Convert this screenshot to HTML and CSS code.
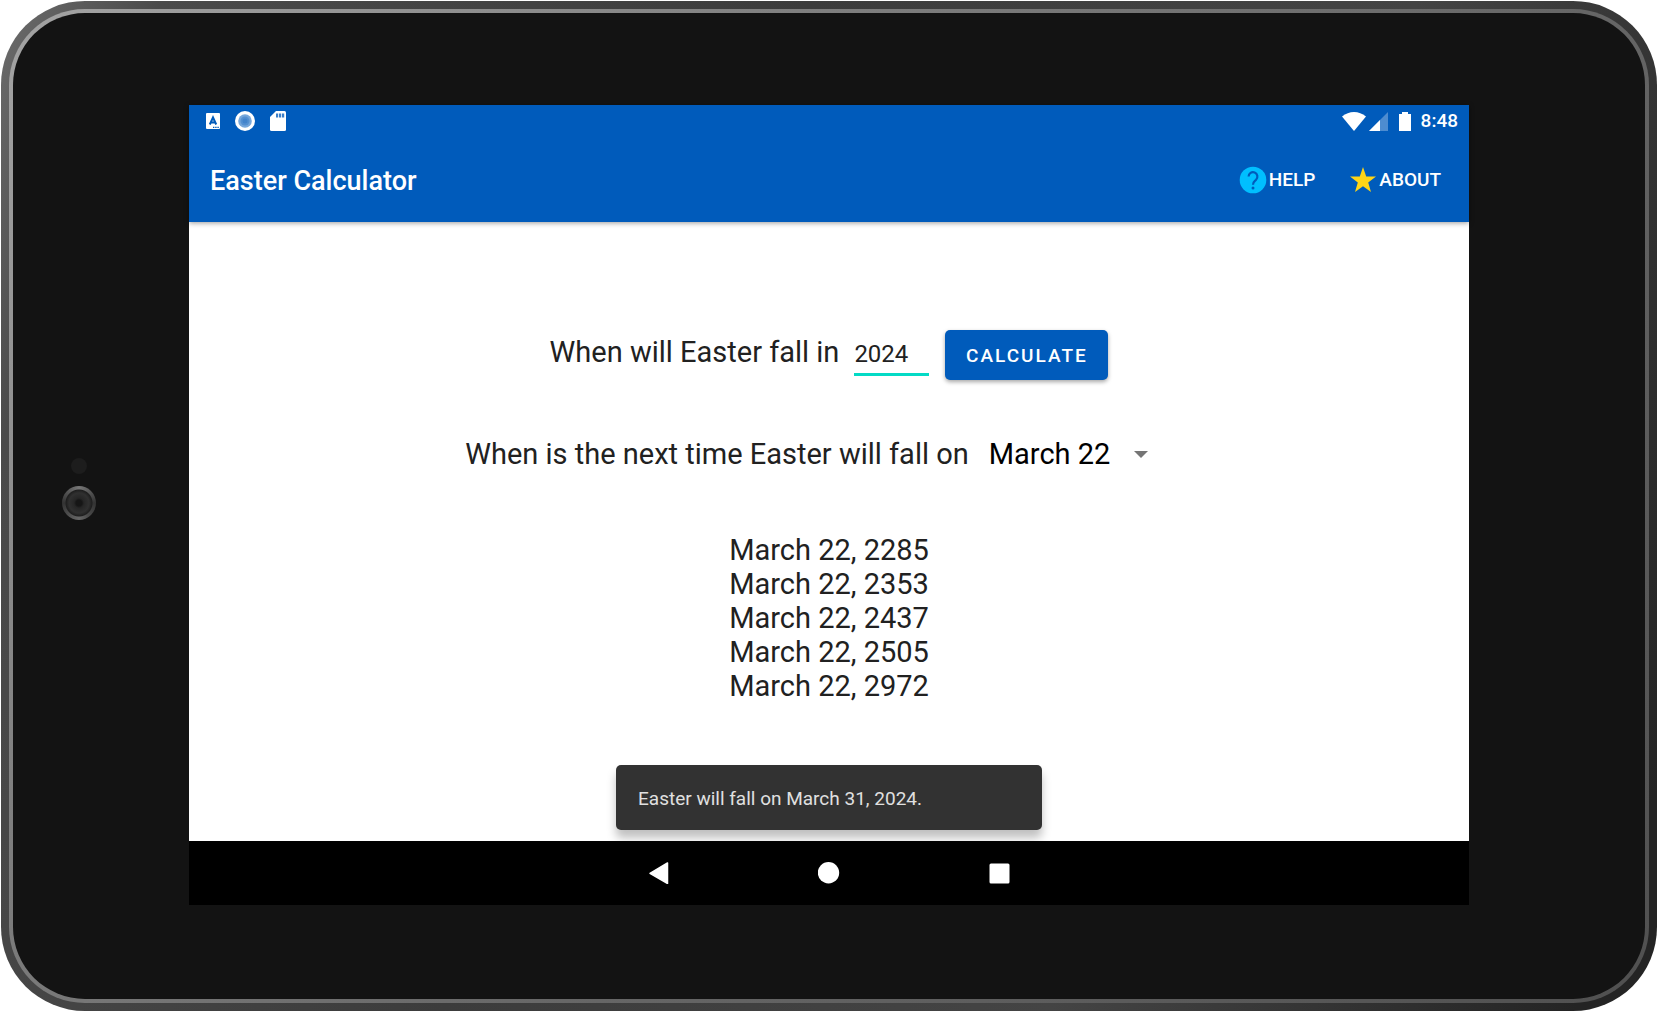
FILE: index.html
```html
<!DOCTYPE html>
<html lang="en">
<head>
<meta charset="utf-8">
<title>Easter Calculator</title>
<link rel="stylesheet" href="styles.css">
</head>
<body>
<div class="device">
  <div class="rim">
    <div class="bezel">
      <div class="camera">
        <span class="sensor"></span>
        <span class="lens"></span>
      </div>
      <div class="screen">
        <header class="top">
          <div class="status">
            <div class="status-left">
              <svg width="14" height="16" viewBox="0 0 14 16"><rect width="14" height="16" rx="1" fill="#fff"/><path d="M3.800 11.500 7 4.500l3.200 7M5 9.500h4" fill="none" stroke="#005bbb" stroke-width="2"/><path d="M7 14.300h6" stroke="#005bbb" stroke-width="1.200" stroke-dasharray="1.400 .8"/></svg>
              <svg width="20" height="20" viewBox="0 0 20 20"><circle cx="10" cy="10" r="10" fill="#fff"/><circle cx="10" cy="10" r="6.800" fill="#76a7db"/><circle cx="10" cy="10" r="4.500" fill="#5490d1"/><circle cx="10" cy="10" r="2.500" fill="#4384cb"/></svg>
              <svg width="16" height="20" viewBox="0 0 16 20"><path d="M6 0h8.500Q16 0 16 1.500v17q0 1.500-1.500 1.500h-13Q0 20 0 18.500V6z" fill="#fff"/><path d="M6 2.500h2.200v4H6zM9 2.500h2.200v4H9zM12 2.500h2.200v4H12z" fill="#3a7fca"/></svg>
            </div>
            <div class="status-right">
              <svg width="24" height="19" viewBox="0 0 24 19"><path d="M0 4.500Q5.500 0 12 0t12 4.500L12 19z" fill="#fff"/></svg>
              <svg class="cell" width="19" height="19" viewBox="0 0 19 19"><path d="M0 19 19 0v19z" fill="#4d8cd0"/><path d="M0 19 11 8v11z" fill="#fff"/></svg>
              <svg class="battery" width="12" height="19" viewBox="0 0 12 19"><path d="M3 0h6v2h3v17H0V2h3z" fill="#fff"/></svg>
              <span class="clock">8:48</span>
            </div>
          </div>
          <div class="toolbar">
            <h1 class="title">Easter Calculator</h1>
            <button class="action" type="button">
              <svg width="28" height="28" viewBox="0 0 28 28"><circle cx="14" cy="14" r="13.300" fill="#00bfff"/><path d="M9.600 10.600a4.400 4.400 0 1 1 7.500 3.100c-1.700 1.700-3.100 2.300-3.100 5" fill="none" stroke="#005bbb" stroke-width="2.200"/><circle cx="14" cy="22" r="1.500" fill="#005bbb"/></svg>HELP
            </button>
            <button class="action" type="button">
              <svg width="28" height="28" viewBox="0 0 28 28"><path d="m14 1 3.200 9.400H27l-7.800 6L22 26l-8-5.700L6 26l2.800-9.600-7.800-6h9.800z" fill="#ffd517"/></svg>ABOUT
            </button>
          </div>
        </header>
        <main class="content">
          <form class="row year-row">
            <label class="prompt" for="year">When will Easter fall in</label>
            <input class="year" id="year" type="text" inputmode="numeric" value="2024">
            <button class="calculate" type="button">CALCULATE</button>
          </form>
          <form class="row date-row">
            <label class="prompt" for="date">When is the next time Easter will fall on</label>
            <span class="picker">
              <select class="date" id="date">
                <option>March 22</option>
                <option>March 23</option>
                <option>March 24</option>
              </select>
              <svg class="arrow" width="14" height="7" viewBox="0 0 14 7"><path d="M0 0h14L7 7z" fill="#757575"/></svg>
            </span>
          </form>
          <ul class="results">
            <li>March 22, 2285</li>
            <li>March 22, 2353</li>
            <li>March 22, 2437</li>
            <li>March 22, 2505</li>
            <li>March 22, 2972</li>
          </ul>
          <div class="toast" role="status">Easter will fall on March 31, 2024.</div>
        </main>
        <nav class="nav">
          <button class="key" type="button" aria-label="Back"><svg width="22" height="22" viewBox="0 0 22 22"><path d="M20.500 1v20.500L3 11.300z" fill="#fff" stroke="#fff" stroke-width="1.500" stroke-linejoin="round"/></svg></button>
          <button class="key" type="button" aria-label="Home"><svg width="22" height="22" viewBox="0 0 22 22"><circle cx="10.500" cy="10.700" r="10.700" fill="#fff"/></svg></button>
          <button class="key" type="button" aria-label="Recent apps"><svg width="22" height="22" viewBox="0 0 22 22"><rect x=".5" y="1.500" width="20" height="20" rx="1.500" fill="#fff"/></svg></button>
        </nav>
      </div>
    </div>
  </div>
</div>
</body>
</html>
```
FILE: styles.css
```css
* {
  box-sizing: border-box;
}

body {
  display: flex;
  min-height: 100vh;
  margin: 0;
  padding: 1px;
  background: #fff;
  color: #212121;
  font-family: Roboto, "Liberation Sans", sans-serif;
}

button,
input,
select {
  font-family: inherit;
}

svg {
  display: block;
  flex: none;
}

/* Tablet body */
.device {
  display: flex;
  flex: 1;
  padding: 8px;
  border-radius: 84px;
  background: linear-gradient(110deg, #6c6c6c 0, #4a4a4a 8%, #3c3c3c 40%, #444 70%, #242424 96%);
}

.rim {
  display: flex;
  flex: 1;
  padding: 4px;
  border-radius: 76px;
  background: linear-gradient(135deg, #a4a4a4, #808080 30%, #666 60%, #505050);
}

.bezel {
  position: relative;
  display: flex;
  flex: 1;
  padding: 92px 176px 94px;
  border-radius: 72px;
  background: #131313;
}

.camera {
  position: absolute;
  top: 50%;
  left: 48px;
  display: flex;
  flex-direction: column;
  align-items: center;
  gap: 12px;
  width: 36px;
  margin-top: -48px;
}

.sensor {
  width: 16px;
  height: 16px;
  border-radius: 50%;
  background: #1d1d1d;
}

.lens {
  width: 34px;
  height: 34px;
  border-radius: 50%;
  background:
    radial-gradient(circle, #161616 0 3px, #262626 5px, #303030 10px, #1f1f1f 13px, transparent 14px),
    conic-gradient(#777, #333 25%, #4a4a4a 40%, #666 50%, #333 75%, #777);
}

/* App window */
.screen {
  display: flex;
  flex: 1;
  flex-direction: column;
  background: #fff;
}

.top {
  position: relative;
  background: #005bbb;
  box-shadow: 0 1px 5px rgba(0, 0, 0, 0.4);
  color: #fff;
}

.status {
  display: flex;
  justify-content: space-between;
  height: 32px;
  padding: 0 11px 0 17px;
}

.status-left,
.status-right {
  display: flex;
  align-items: center;
}

.status-left {
  gap: 15px;
}

.cell {
  margin-left: 3px;
}

.battery {
  margin: 0 10px 0 11px;
}

.clock {
  font-size: 19px;
  font-weight: 500;
  line-height: 22px;
}

.toolbar {
  display: flex;
  align-items: center;
  gap: 34px;
  height: 85px;
  padding: 0 28px 0 21px;
}

.title {
  flex: 1;
  margin: 0;
  padding-top: 2px;
  font-size: 27px;
  font-weight: 500;
  line-height: 32px;
}

.action {
  display: flex;
  align-items: center;
  gap: 2px;
  padding: 0;
  border: 0;
  background: none;
  color: inherit;
  font-size: 19px;
  font-weight: 500;
  line-height: 28px;
}

.content {
  display: flex;
  flex: 1;
  flex-direction: column;
  align-items: center;
  padding: 108px 16px 11px;
}

.row {
  display: flex;
}

.year-row {
  align-items: baseline;
}

.prompt {
  font-size: 29px;
  line-height: 34px;
}

.year {
  width: 75px;
  height: 38px;
  margin: 0 16px 0 15px;
  padding: 0 0 4px;
  border: 0;
  border-bottom: 3px solid #03dac5;
  outline: 0;
  background: none;
  color: #212121;
  font-size: 24px;
}

.calculate {
  width: 163px;
  height: 50px;
  padding: 0;
  border: 0;
  border-radius: 5px;
  background: #005bbb;
  box-shadow: 0 2px 4px rgba(0, 0, 0, 0.35);
  color: #fff;
  font-size: 19px;
  font-weight: 500;
  letter-spacing: 2px;
}

.date-row {
  align-items: center;
  gap: 20px;
  margin-top: 57px;
}

.picker {
  position: relative;
  width: 204px;
}

.date {
  display: block;
  width: 100%;
  padding: 0;
  border: 0;
  appearance: none;
  background: none;
  color: #000;
  font-size: 29px;
  line-height: 34px;
}

.arrow {
  position: absolute;
  top: 14px;
  right: 45px;
  pointer-events: none;
}

.results {
  margin: 62px 0 0;
  padding: 0;
  list-style: none;
  font-size: 29px;
  line-height: 34px;
}

.toast {
  width: 426px;
  margin-top: auto;
  padding: 22px 22px 20px;
  border-radius: 5px;
  background: #323232;
  box-shadow: 0 8px 10px rgba(0, 0, 0, 0.25);
  color: #e0e0e0;
  font-size: 19px;
  line-height: 23px;
}

.nav {
  position: relative;
  display: flex;
  justify-content: center;
  gap: 149px;
  height: 64px;
  background: #000;
}

.key {
  padding: 0;
  border: 0;
  background: none;
}
```
